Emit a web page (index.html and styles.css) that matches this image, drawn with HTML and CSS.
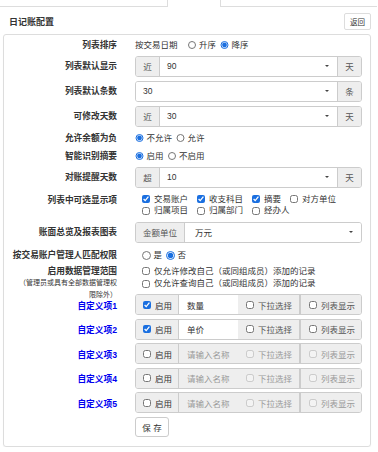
FILE: index.html
```html
<!DOCTYPE html>
<html>
<head>
    <meta charset="utf-8">
    <title>日记账配置</title>
    <link rel="stylesheet" href="styles.css">
</head>
<body>
    <div class="tabs">
        <span class="tab-line tab-left"></span>
        <span class="tab-active"></span>
        <span class="tab-line tab-right"></span>
    </div>

    <div class="head">
        <span class="title">日记账配置</span>
        <button class="btn btn-back">返回</button>
    </div>

    <div class="panel">
        <!-- 列表排序 -->
        <div class="form-row text-row">
            <label class="row-label">列表排序</label>
            <div class="options">
                <span class="plain">按交易日期</span>
                <label class="opt"><input type="radio" name="sort"> 升序</label>
                <label class="opt"><input type="radio" name="sort" checked> 降序</label>
            </div>
        </div>

        <div class="form-row">
            <label class="row-label">列表默认显示</label>
            <div class="input-group">
                <span class="addon addon-sm">近</span>
                <div class="select">90<i class="caret"></i></div>
                <span class="addon addon-sm addon-end">天</span>
            </div>
        </div>

        <div class="form-row">
            <label class="row-label">列表默认条数</label>
            <div class="input-group">
                <div class="select">30<i class="caret"></i></div>
                <span class="addon addon-sm addon-end">条</span>
            </div>
        </div>

        <div class="form-row">
            <label class="row-label">可修改天数</label>
            <div class="input-group">
                <span class="addon addon-sm">近</span>
                <div class="select">30<i class="caret"></i></div>
                <span class="addon addon-sm addon-end">天</span>
            </div>
        </div>

        <div class="form-row text-row">
            <label class="row-label">允许余额为负</label>
            <div class="options">
                <label class="opt"><input type="radio" name="neg" checked> 不允许</label>
                <label class="opt"><input type="radio" name="neg"> 允许</label>
            </div>
        </div>

        <div class="form-row text-row">
            <label class="row-label">智能识别摘要</label>
            <div class="options">
                <label class="opt"><input type="radio" name="smart" checked> 启用</label>
                <label class="opt"><input type="radio" name="smart"> 不启用</label>
            </div>
        </div>

        <div class="form-row">
            <label class="row-label">对账提醒天数</label>
            <div class="input-group">
                <span class="addon addon-sm">超</span>
                <div class="select">10<i class="caret"></i></div>
                <span class="addon addon-sm addon-end">天</span>
            </div>
        </div>

        <div class="form-row list-row">
            <label class="row-label">列表中可选显示项</label>
            <div class="check-list">
                <label class="chk"><input type="checkbox" checked>交易账户</label>
                <label class="chk"><input type="checkbox" checked>收支科目</label>
                <label class="chk"><input type="checkbox" checked>摘要</label>
                <label class="chk"><input type="checkbox">对方单位</label>
                <label class="chk"><input type="checkbox">归属项目</label>
                <label class="chk"><input type="checkbox">归属部门</label>
                <label class="chk"><input type="checkbox">经办人</label>
            </div>
        </div>

        <div class="form-row">
            <label class="row-label">账面总览及报表图表</label>
            <div class="input-group">
                <span class="addon addon-wide">金额单位</span>
                <div class="select select-unit">万元<i class="caret"></i></div>
            </div>
        </div>

        <div class="form-row text-row match-row">
            <label class="row-label">按交易账户管理人匹配权限</label>
            <div class="options options-pad">
                <label class="opt"><input type="radio" name="match"> 是</label>
                <label class="opt"><input type="radio" name="match" checked> 否</label>
            </div>
        </div>

        <div class="form-row scope-row">
            <label class="row-label">启用数据管理范围
                <span class="note">（管理员或具有全部数据管理权限除外）</span>
            </label>
            <div class="check-list check-col">
                <label class="chk"><input type="checkbox">仅允许修改自己（或同组成员）添加的记录</label>
                <label class="chk"><input type="checkbox">仅允许查询自己（或同组成员）添加的记录</label>
            </div>
        </div>

        <div class="form-row custom-row">
            <label class="row-label custom">自定义项1</label>
            <div class="input-group">
                <label class="addon addon-en"><input type="checkbox" checked>启用</label>
                <div class="name">数量</div>
                <label class="addon addon-opt"><input type="checkbox">下拉选择</label>
                <label class="addon addon-opt addon-end"><input type="checkbox">列表显示</label>
            </div>
        </div>

        <div class="form-row custom-row">
            <label class="row-label custom">自定义项2</label>
            <div class="input-group">
                <label class="addon addon-en"><input type="checkbox" checked>启用</label>
                <div class="name">单价</div>
                <label class="addon addon-opt"><input type="checkbox">下拉选择</label>
                <label class="addon addon-opt addon-end"><input type="checkbox">列表显示</label>
            </div>
        </div>

        <div class="form-row custom-row">
            <label class="row-label custom">自定义项3</label>
            <div class="input-group off">
                <label class="addon addon-en"><input type="checkbox">启用</label>
                <div class="name empty">请输入名称</div>
                <label class="addon addon-opt"><input type="checkbox" disabled>下拉选择</label>
                <label class="addon addon-opt addon-end"><input type="checkbox" disabled>列表显示</label>
            </div>
        </div>

        <div class="form-row custom-row">
            <label class="row-label custom">自定义项4</label>
            <div class="input-group off">
                <label class="addon addon-en"><input type="checkbox">启用</label>
                <div class="name empty">请输入名称</div>
                <label class="addon addon-opt"><input type="checkbox" disabled>下拉选择</label>
                <label class="addon addon-opt addon-end"><input type="checkbox" disabled>列表显示</label>
            </div>
        </div>

        <div class="form-row custom-row">
            <label class="row-label custom">自定义项5</label>
            <div class="input-group off">
                <label class="addon addon-en"><input type="checkbox">启用</label>
                <div class="name empty">请输入名称</div>
                <label class="addon addon-opt"><input type="checkbox" disabled>下拉选择</label>
                <label class="addon addon-opt addon-end"><input type="checkbox" disabled>列表显示</label>
            </div>
        </div>

        <div class="form-row save-row">
            <span></span>
            <div><button class="btn btn-save">保 存</button></div>
        </div>
    </div>
</body>
</html>
```

FILE: styles.css
```css
body {
    margin: 0;
    width: 377px;
    font-family: "Liberation Sans", "Noto Sans CJK SC", sans-serif;
    font-size: 8.5px;
    color: #333;
}
.tabs {
    display: flex;
    height: 7px;
}
.tab-line {
    border-bottom: 1px solid #ddd;
}
.tab-left {
    width: 167px;
}
.tab-active {
    width: 52px;
    border-left: 1px solid #ddd;
    border-right: 1px solid #ddd;
}
.tab-right {
    flex: 1;
}
.head {
    display: flex;
    justify-content: space-between;
    align-items: center;
    padding: 6px 6px 4px 9px;
}
.title {
    font-size: 9px;
    font-weight: bold;
}
.btn {
    font-family: inherit;
    background: #fff;
    border: 1px solid #ddd;
    border-radius: 2px;
    color: #333;
    cursor: pointer;
}
.btn-back {
    font-size: 7.5px;
    width: 27px;
    height: 17px;
    padding: 0;
}
.btn-save {
    font-size: 8.5px;
    width: 34px;
    height: 20px;
    padding: 0;
    border-color: #ccc;
    border-radius: 3px;
}
.panel {
    margin: 0 6px 0 3px;
    border: 1px solid #ddd;
    border-radius: 3px;
    padding: 2.5px 0 9px;
    box-shadow: 0 1px 1px rgba(0, 0, 0, 0.05);
}
.form-row {
    display: grid;
    grid-template-columns: 113px 227px;
    column-gap: 18px;
    align-items: center;
    margin-bottom: 4px;
}
.row-label {
    text-align: right;
    font-weight: bold;
    font-size: 8.7px;
    line-height: 12px;
}
.row-label.custom {
    color: #0000f0;
    padding-top: 2px;
}
.text-row {
    height: 15px;
    margin-bottom: 3px;
}
.options {
    display: flex;
    align-items: center;
    gap: 4px;
    line-height: 15px;
}
.options-pad {
    padding-left: 7px;
}
.plain {
    margin-right: 6px;
}
.opt {
    display: flex;
    align-items: center;
}
input[type="radio"] {
    width: 8.5px;
    height: 8.5px;
    margin: 0 3px 0 0;
    accent-color: #1a6fe0;
}
input[type="checkbox"] {
    width: 8px;
    height: 8px;
    margin: 0 4px 0 0;
    accent-color: #1a6fe0;
}
.input-group {
    display: flex;
    height: 21px;
    box-sizing: border-box;
    border: 1px solid #ccc;
    border-radius: 3px;
    overflow: hidden;
}
.addon {
    display: flex;
    align-items: center;
    justify-content: center;
    background: #eee;
    color: #555;
    border-right: 1px solid #ccc;
}
.addon-end {
    border-right: 0;
    border-left: 1px solid #ccc;
}
.addon-sm {
    width: 23px;
}
.addon-wide {
    width: 48px;
}
.select {
    flex: 1;
    display: flex;
    align-items: center;
    justify-content: space-between;
    padding: 0 8px 0 7px;
    background: #fff;
}
.caret {
    width: 0;
    height: 0;
    border-left: 2px solid transparent;
    border-right: 2px solid transparent;
    border-top: 2.5px solid #444;
}
.select-unit {
    padding-left: 10px;
}
.list-row {
    align-items: start;
    margin-top: 6px;
    margin-bottom: 5px;
}
.check-list {
    display: flex;
    flex-wrap: wrap;
    column-gap: 9px;
    padding-left: 7px;
    line-height: 11.7px;
}
.check-col {
    flex-direction: column;
    line-height: 12.5px;
}
.chk {
    display: flex;
    align-items: center;
}
.match-row {
    margin-top: 5px;
    margin-bottom: 2px;
}
.scope-row {
    align-items: start;
    margin-top: 1.5px;
    margin-bottom: 4.5px;
}
.scope-row .row-label {
    margin-bottom: -12px;
}
.note {
    display: block;
    padding-left: 13px;
    font-weight: normal;
    font-size: 7px;
    line-height: 12px;
    color: #333;
}
.custom-row {
    margin-bottom: 3.5px;
}
.save-row {
    margin-top: 1px;
    margin-bottom: 0;
}
.addon-en {
    width: 43px;
    color: #333;
    justify-content: flex-start;
    padding-left: 7px;
    box-sizing: border-box;
}
.addon-opt {
    width: 62px;
    justify-content: flex-start;
    padding-left: 8px;
    box-sizing: border-box;
}
.addon-opt.addon-end {
    flex: 1;
    width: auto;
}
.name {
    width: 59px;
    display: flex;
    align-items: center;
    padding-left: 8px;
    box-sizing: border-box;
    background: #fff;
}
.name.empty {
    background: #eee;
    color: #999;
}
.off .addon-opt {
    color: #999;
}
```
